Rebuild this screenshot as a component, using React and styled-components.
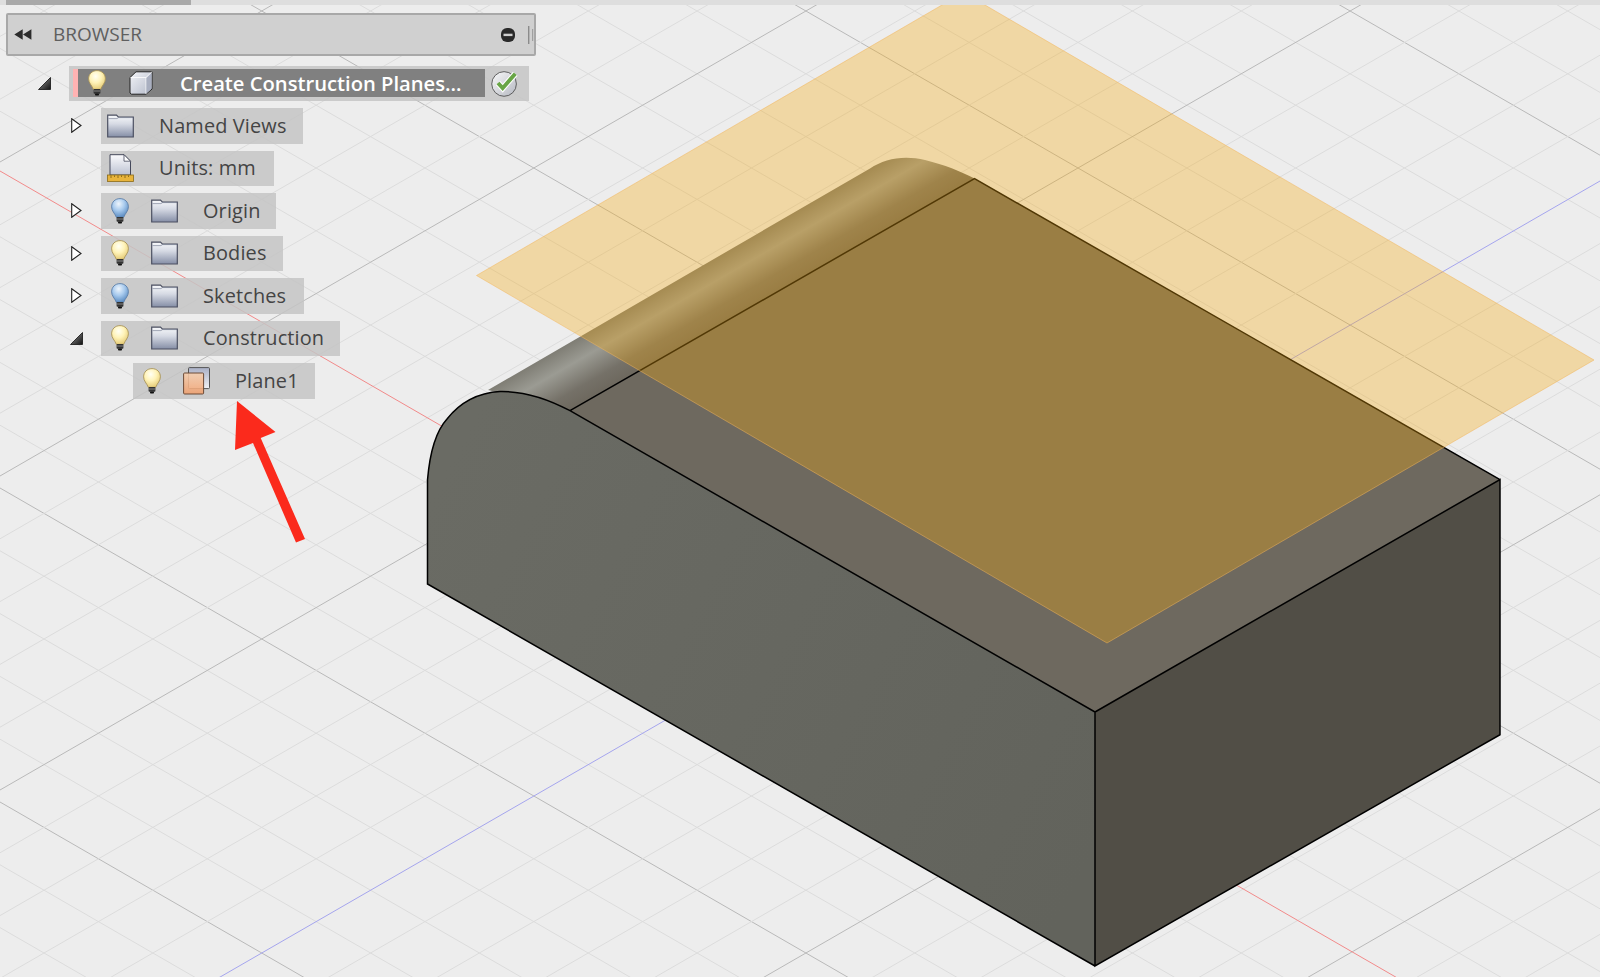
import React from "react";
import styled, { createGlobalStyle } from "styled-components";

const GlobalStyle = createGlobalStyle`
  html, body {
    margin: 0;
    padding: 0;
    background: #ededed;
  }
  body {
    font-family: "Open Sans", "Liberation Sans", sans-serif;
  }
`;

const Page = styled.div`
  position: relative;
  width: 1600px;
  height: 977px;
  overflow: hidden;
  background: #ededed;
`;

const Scene = styled.svg`
  position: absolute;
  left: 0;
  top: 0;
  pointer-events: ${(p) => (p.$overlay ? "none" : "auto")};
`;

const TopStrip = styled.div`
  position: relative;
  height: 5px;
  background: #dedede;
  padding-left: 6px;
`;

const TopStripTab = styled.div`
  width: 185px;
  height: 5px;
  background: #a9a9a9;
`;

const Browser = styled.div`
  position: relative;
  width: 530px;
  margin: 8px 0 0 6px;
`;

const BrowserHeader = styled.div`
  box-sizing: border-box;
  height: 43px;
  display: flex;
  align-items: center;
  padding: 0 0 0 6px;
  background: #d0d0d0;
  border: 2px solid #a8a8a8;
  border-radius: 2px;
  color: #5f5f5f;
`;

const BrowserTitle = styled.span`
  flex: 1;
  margin: -2px 0 0 21px;
  font-size: 19px;
`;

const Tree = styled.div`
  display: flex;
  flex-direction: column;
  gap: 7px;
  margin: 9.7px 0 0 -6px;
`;

const TreeLine = styled.div`
  display: flex;
  align-items: center;
  height: 35.5px;
  padding-left: ${(p) => 37 + p.$level * 32}px;
`;

const Twisty = styled.div`
  width: 32px;
  height: 35.5px;
  flex: none;
  display: flex;
  align-items: center;
  padding-left: ${(p) => (p.$open ? 1 : 2)}px;
  box-sizing: border-box;
`;

const Row = styled.div`
  box-sizing: border-box;
  width: ${(p) => p.$width}px;
  height: 35.5px;
  flex: none;
  display: flex;
  align-items: center;
  padding-left: 6px;
  background: rgba(196, 196, 196, 0.85);
  color: #444;
  font-size: 19.9px;
  letter-spacing: 0.15px;
`;

const RowLabel = styled.span`
  margin-top: -1px;
`;

const Slot = styled.div`
  width: ${(p) => p.$width}px;
  flex: none;
  display: flex;
  align-items: center;
  padding-left: ${(p) => p.$inset || 0}px;
  box-sizing: border-box;
`;

const ActiveRow = styled.div`
  box-sizing: border-box;
  width: 460px;
  height: 35px;
  flex: none;
  display: flex;
  align-items: center;
  padding-left: 4px;
  background: rgba(196, 196, 196, 0.85);
`;

const ActiveMark = styled.div`
  width: 5px;
  height: 28px;
  flex: none;
  background: #ffb3b3;
`;

const ActiveBody = styled.div`
  box-sizing: border-box;
  width: 407px;
  height: 28px;
  flex: none;
  display: flex;
  align-items: center;
  padding-left: 10px;
  background: #808080;
  color: #fff;
  font-size: 20.2px;
  font-weight: 600;
  white-space: nowrap;
`;

const SLOPE = 0.577;
const STEP = 62.8;

const gridLines = (origin, sign, min, max) => {
  const lines = [];
  const first = Math.ceil((min - origin) / STEP);
  const last = Math.floor((max - origin) / STEP);
  for (let k = first; k <= last; k++) {
    if (k === 0) continue;
    const c = origin + k * STEP;
    lines.push({
      key: `${sign}${k}`,
      major: k % 5 === 0,
      y1: c,
      y2: c + sign * SLOPE * 1600,
    });
  }
  return lines;
};

const grid = [
  ...gridLines(174, 1, -1000, 1000),
  ...gridLines(1104, -1, 0, 1950),
];

const SceneDefs = () => (
  <defs>
    <radialGradient id="bulbYellow" cx="0.42" cy="0.3" r="0.7">
      <stop offset="0" stopColor="#fffff4" />
      <stop offset="0.5" stopColor="#fff3b8" />
      <stop offset="1" stopColor="#e6cc78" />
    </radialGradient>
    <radialGradient id="bulbBlue" cx="0.42" cy="0.28" r="0.7">
      <stop offset="0" stopColor="#eef5fc" />
      <stop offset="0.5" stopColor="#a9cbee" />
      <stop offset="1" stopColor="#5f8fc4" />
    </radialGradient>
    <linearGradient id="folderFill" x1="0" y1="0" x2="0" y2="1">
      <stop offset="0" stopColor="#f8f9fb" />
      <stop offset="0.4" stopColor="#d6dae4" />
      <stop offset="1" stopColor="#858ea6" />
    </linearGradient>
    <linearGradient id="cubeFill" x1="0" y1="0" x2="1" y2="1">
      <stop offset="0" stopColor="#f3f4f8" />
      <stop offset="1" stopColor="#b4bac9" />
    </linearGradient>
    <linearGradient id="docFill" x1="0" y1="0" x2="0" y2="1">
      <stop offset="0" stopColor="#fbfbfd" />
      <stop offset="1" stopColor="#bcc2d2" />
    </linearGradient>
    <linearGradient id="checkFill" x1="0" y1="0" x2="1" y2="1">
      <stop offset="0" stopColor="#fafafa" />
      <stop offset="1" stopColor="#b4b7c0" />
    </linearGradient>
    <linearGradient id="frontFace" gradientUnits="userSpaceOnUse" x1="430" y1="500" x2="1095" y2="850">
      <stop offset="0" stopColor="#6a6b64" />
      <stop offset="1" stopColor="#62635c" />
    </linearGradient>
    <linearGradient id="filletFace" gradientUnits="userSpaceOnUse" x1="476" y1="393" x2="506" y2="445">
      <stop offset="0" stopColor="#7a786f" />
      <stop offset="0.38" stopColor="#9b9b93" />
      <stop offset="0.78" stopColor="#757168" />
      <stop offset="1" stopColor="#6e695f" />
    </linearGradient>
  </defs>
);

const Model = () => (
  <g>
    <path
      d="M488 390 L570 410.7 L974.5 178.6 C960 171 945 165 925 160 C905 155 885 158 870 168.5 Z"
      fill="url(#filletFace)"
    />
    <polygon points="570,410.7 974.5,178.6 1500,479.6 1095,712" fill="#6e695f" />
    <polygon points="1095,712 1500,479.6 1500,734.7 1095,966" fill="#514e46" />
    <path
      d="M427.5 584 L427.5 480 C430 450 437 430 447 419 C458 405 475 393 500 391.5 C525 391 550 400 570 410.7 L1095 712 L1095 966 Z"
      fill="url(#frontFace)"
    />
    <path
      d="M1095 966 L427.5 584 L427.5 480 C430 450 437 430 447 419 C458 405 475 393 500 391.5 C525 391 550 400 570 410.7 L1095 712 L1095 966 L1500 734.7 L1500 479.6 L1095 712 M570 410.7 L974.5 178.6 L1500 479.6"
      fill="none"
      stroke="#000"
      strokeWidth="1.5"
    />
    <polygon
      points="476.5,275.5 963.5,-7.5 1594,360 1107,643"
      fill="#f6aa10"
      fillOpacity="0.33"
      stroke="#f3b55a"
      strokeOpacity="0.5"
      strokeWidth="1"
    />
  </g>
);

const Workspace = () => (
  <Scene width="1600" height="977" viewBox="0 0 1600 977">
    <SceneDefs />
    {grid.map((l) => (
      <line
        key={l.key}
        x1="0"
        x2="1600"
        y1={l.y1}
        y2={l.y2}
        stroke={l.major ? "#b9b9b9" : "#dcdcdc"}
        strokeWidth="1"
      />
    ))}
    <line x1="0" y1="171" x2="1600" y2="1095" stroke="#f28a8a" strokeWidth="1" />
    <line x1="0" y1="1104" x2="1600" y2="181" stroke="#a5a5ee" strokeWidth="1" />
    <Model />
  </Scene>
);

const CollapseIcon = () => (
  <svg width="18" height="11" viewBox="0 0 18 11">
    <path d="M8.7 0.3 V10.7 L0.3 5.5 Z M17.4 0.3 V10.7 L9 5.5 Z" fill="#2c2c2c" />
  </svg>
);

const MinusIcon = () => (
  <svg width="14" height="14" viewBox="0 0 14 14">
    <rect x="0" y="0" width="14" height="14" rx="6" fill="#2a2a2a" />
    <rect x="2.5" y="5.7" width="9" height="2.4" fill="#cfcfcf" />
  </svg>
);

const GripIcon = () => (
  <svg width="6" height="18" viewBox="0 0 6 18">
    <rect x="0" y="0" width="1.4" height="18" fill="#8b8b8b" />
    <rect x="4" y="3" width="1.2" height="12" fill="#a0a0a0" />
  </svg>
);

const OpenArrow = () => (
  <svg width="13" height="13" viewBox="0 0 13 13">
    <defs>
      <linearGradient id="openArrowFill" x1="0" y1="0" x2="1" y2="1">
        <stop offset="0" stopColor="#9a9a9a" />
        <stop offset="1" stopColor="#111" />
      </linearGradient>
    </defs>
    <path d="M12.5 0.5 V12.5 H0.5 Z" fill="url(#openArrowFill)" stroke="#111" strokeWidth="0.8" />
  </svg>
);

const ClosedArrow = () => (
  <svg width="11" height="15" viewBox="0 0 11 15">
    <path d="M0.7 0.7 L10 7.5 L0.7 14.3 Z" fill="#fff" stroke="#222" strokeWidth="1.1" />
  </svg>
);

const BulbIcon = ({ tone }) => (
  <svg width="18" height="26" viewBox="0 0 18 26">
    <path
      d="M9 0.6 C4 0.6 0.6 4.2 0.6 8.8 C0.6 13 3.6 15 5.4 19.4 H12.6 C14.4 15 17.4 13 17.4 8.8 C17.4 4.2 14 0.6 9 0.6 Z"
      fill={tone === "blue" ? "url(#bulbBlue)" : "url(#bulbYellow)"}
      stroke={tone === "blue" ? "#5d7fa8" : "#a8945a"}
      strokeWidth="0.9"
    />
    <rect x="5.6" y="19" width="6.8" height="4.8" rx="0.8" fill="#333" />
    <rect x="7" y="23.6" width="4" height="2" rx="0.8" fill="#111" />
    <rect x="5.8" y="20.6" width="6.4" height="0.8" fill="#999" />
  </svg>
);

const FolderIcon = () => (
  <svg width="27" height="24" viewBox="0 0 27 24">
    <path
      d="M0.7 23 V1.2 H9.5 L11.5 3.2 H26.3 V23 Z"
      fill="url(#folderFill)"
      stroke="#4c5062"
      strokeWidth="1.2"
    />
    <path d="M1.4 4.6 H10 L11.5 3.6 H25.6" fill="none" stroke="#8d93a5" strokeWidth="0.8" />
  </svg>
);

const CubeIcon = () => (
  <svg width="24" height="24" viewBox="0 0 24 24">
    <path d="M1 6.5 L7 0.8 H23 V18 L17 23.2 H2.5 L1 22 Z" fill="url(#cubeFill)" stroke="#222" strokeWidth="1" />
    <path d="M1.5 6.5 H17 L23 0.8 M17 6.5 V23" fill="none" stroke="#fff" strokeWidth="0.8" />
    <path d="M17.4 7 L22.6 2 V17.6 L17.4 22.4 Z" fill="#a9afc0" />
  </svg>
);

const UnitsIcon = () => (
  <svg width="27" height="28" viewBox="0 0 27 28">
    <path d="M3 21 V0.7 H17 L23.5 7.2 V21 Z" fill="url(#docFill)" stroke="#44485a" strokeWidth="1" />
    <path d="M17 0.7 V7.2 H23.5 Z" fill="#fff" stroke="#44485a" strokeWidth="0.8" />
    <rect x="0.5" y="21" width="26" height="6.5" fill="#e8b43c" stroke="#8a6a18" strokeWidth="0.8" />
    <path
      d="M4 21.4 V24 M7.5 21.4 V23 M11 21.4 V24 M14.5 21.4 V23 M18 21.4 V24 M21.5 21.4 V23"
      stroke="#7a5c10"
      strokeWidth="0.8"
    />
  </svg>
);

const PlaneIcon = () => (
  <svg width="27" height="28" viewBox="0 0 27 28">
    <defs>
      <linearGradient id="planeBack" x1="0" y1="0" x2="0" y2="1">
        <stop offset="0" stopColor="#aab0c6" />
        <stop offset="1" stopColor="#f0f1f5" />
      </linearGradient>
      <linearGradient id="planeFront" x1="0" y1="0" x2="0" y2="1">
        <stop offset="0" stopColor="#f7cfae" />
        <stop offset="1" stopColor="#ef9e6c" />
      </linearGradient>
    </defs>
    <rect x="5.5" y="0.6" width="21" height="21" rx="1" fill="url(#planeBack)" stroke="#555" strokeWidth="1" />
    <rect x="0.6" y="6" width="20" height="21" rx="1" fill="url(#planeFront)" fillOpacity="0.88" stroke="#6d4a36" strokeWidth="1" />
  </svg>
);

const CheckIcon = () => (
  <svg width="30" height="29" viewBox="0 0 30 29">
    <circle cx="14" cy="15" r="13.2" fill="url(#checkFill)" stroke="#555" strokeWidth="1" />
    <path d="M7.5 14 L12.5 19.5 L26 4" fill="none" stroke="#fff" strokeWidth="6.4" />
    <path d="M7.5 14 L12.5 19.5 L26 4" fill="none" stroke="#68a545" strokeWidth="4.2" />
  </svg>
);

const rows = [
  { label: "Named Views", level: 1, width: 202, arrow: "closed", icon: <FolderIcon />, textAt: 52 },
  { label: "Units: mm", level: 1, width: 173, icon: <UnitsIcon />, textAt: 52 },
  { label: "Origin", level: 1, width: 175, arrow: "closed", bulb: "blue", icon: <FolderIcon /> },
  { label: "Bodies", level: 1, width: 182, arrow: "closed", bulb: "yellow", icon: <FolderIcon /> },
  { label: "Sketches", level: 1, width: 203, arrow: "closed", bulb: "blue", icon: <FolderIcon /> },
  { label: "Construction", level: 1, width: 239, arrow: "open", bulb: "yellow", icon: <FolderIcon /> },
  { label: "Plane1", level: 2, width: 182, bulb: "yellow", icon: <PlaneIcon /> },
];

const TreeRow = ({ row }) => (
  <TreeLine $level={row.level}>
    <Twisty $open={row.arrow === "open"}>
      {row.arrow === "open" && <OpenArrow />}
      {row.arrow === "closed" && <ClosedArrow />}
    </Twisty>
    <Row $width={row.width}>
      {row.bulb && (
        <Slot $width={44} $inset={4}>
          <BulbIcon tone={row.bulb} />
        </Slot>
      )}
      <Slot $width={row.textAt ? row.textAt : 52}>{row.icon}</Slot>
      <RowLabel>{row.label}</RowLabel>
    </Row>
  </TreeLine>
);

export default function App() {
  return (
    <Page>
      <GlobalStyle />
      <Workspace />
      <TopStrip>
        <TopStripTab />
      </TopStrip>
      <Browser>
        <BrowserHeader>
          <CollapseIcon />
          <BrowserTitle>BROWSER</BrowserTitle>
          <MinusIcon />
          <Slot $width={13} />
          <GripIcon />
        </BrowserHeader>
        <Tree>
          <TreeLine $level={0}>
            <Twisty $open>
              <OpenArrow />
            </Twisty>
            <ActiveRow>
              <ActiveMark />
              <ActiveBody>
                <Slot $width={41}>
                  <BulbIcon tone="yellow" />
                </Slot>
                <Slot $width={51}>
                  <CubeIcon />
                </Slot>
                <RowLabel>Create Construction Planes…</RowLabel>
              </ActiveBody>
              <Slot $width={34} $inset={6}>
                <CheckIcon />
              </Slot>
            </ActiveRow>
          </TreeLine>
          {rows.map((row) => (
            <TreeRow key={row.label} row={row} />
          ))}
        </Tree>
      </Browser>
      <Scene $overlay width="1600" height="977" viewBox="0 0 1600 977">
        <path d="M237 401 L275.5 432 L260.7 438 L305 539 L296 542.5 L253 443 L235 450 Z" fill="#fb2a1c" />
      </Scene>
    </Page>
  );
}
